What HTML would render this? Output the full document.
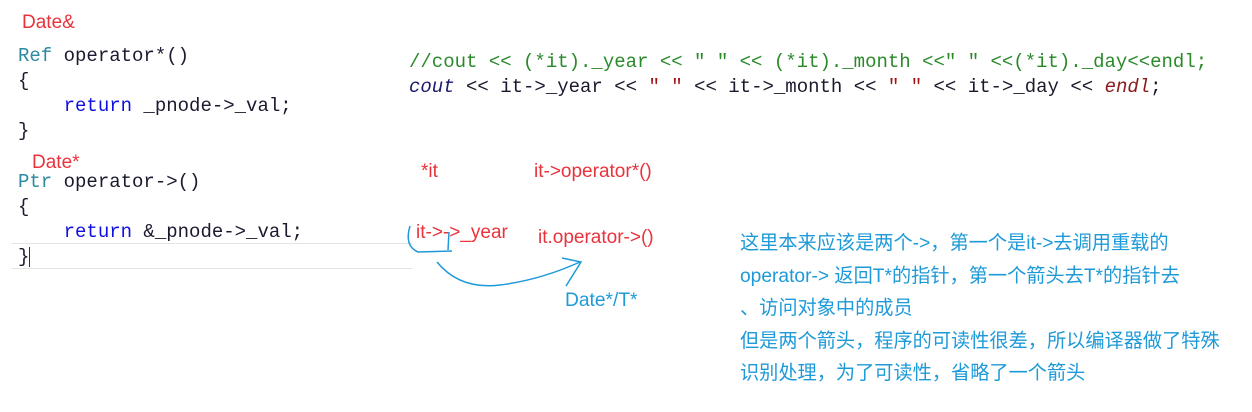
<!DOCTYPE html>
<html><head><meta charset="utf-8"><style>
body{margin:0;width:1252px;height:412px;background:#fff;position:relative;overflow:hidden;font-family:"Liberation Sans","Noto Sans CJK SC",sans-serif}
.c{position:absolute;font-family:"Liberation Mono",monospace;font-size:19px;color:#1a1a2e;white-space:pre;line-height:25px}
.k{color:#1010e0}.t{color:#2b8a9f}.g{color:#2a8a2a}.s{color:#a31515}.i{font-style:italic;color:#1a1a6e}.e{font-style:italic;color:#8b1a1a}
.r{position:absolute;color:#e8333b;font-size:19px;white-space:pre}
.b{position:absolute;color:#1e9ad8;font-size:19.2px;white-space:pre;font-family:"Liberation Sans","Noto Sans CJK SC",sans-serif}
</style></head><body>
<div class="r" style="left:22px;top:12px;font-size:19px">Date&amp;</div>
<div class="c" style="left:18px;top:44px"><span class="t">Ref</span> operator*()
{
    <span class="k">return</span> _pnode-&gt;_val;
}</div>
<div class="r" style="left:32px;top:152px">Date*</div>
<div class="c" style="left:18px;top:170px"><span class="t">Ptr</span> operator-&gt;()
{
    <span class="k">return</span> &amp;_pnode-&gt;_val;
}</div>
<div style="position:absolute;left:12px;top:243px;width:400px;height:1px;background:#e4e4e4"></div>
<div style="position:absolute;left:12px;top:268px;width:400px;height:1px;background:#e4e4e4"></div>
<div style="position:absolute;left:29px;top:247px;width:1px;height:20px;background:#333"></div>
<div class="c" style="left:409px;top:50px"><span class="g">//cout &lt;&lt; (*it)._year &lt;&lt; " " &lt;&lt; (*it)._month &lt;&lt;" " &lt;&lt;(*it)._day&lt;&lt;endl;</span>
<span class="i">cout</span> &lt;&lt; it-&gt;_year &lt;&lt; <span class="s">" "</span> &lt;&lt; it-&gt;_month &lt;&lt; <span class="s">" "</span> &lt;&lt; it-&gt;_day &lt;&lt; <span class="e">endl</span>;</div>
<div class="r" style="left:421px;top:161px">*it</div>
<div class="r" style="left:534px;top:161px">it-&gt;operator*()</div>
<div class="r" style="left:416px;top:222px">it-&gt;-&gt;_year</div>
<div class="r" style="left:538px;top:227px">it.operator-&gt;()</div>
<svg style="position:absolute;left:0;top:0" width="1252" height="412"><g fill="none" stroke="#1e9ad8" stroke-width="1.5">
<path d="M410 226 Q404 246 418 252 L452 251"/><path d="M449 232 L448 250"/>
<path d="M437 262 Q460 290 500 285 Q540 280 580 262"/><path d="M562 258 L581 262 L566 286"/></g></svg>
<div class="b" style="left:565px;top:290px">Date*/T*</div>
<div class="b" style="left:740px;top:228px;line-height:32.5px">这里本来应该是两个-&gt;，第一个是it-&gt;去调用重载的
operator-&gt; 返回T*的指针，第一个箭头去T*的指针去
、访问对象中的成员
但是两个箭头，程序的可读性很差，所以编译器做了特殊
识别处理，为了可读性，省略了一个箭头</div>
</body></html>
